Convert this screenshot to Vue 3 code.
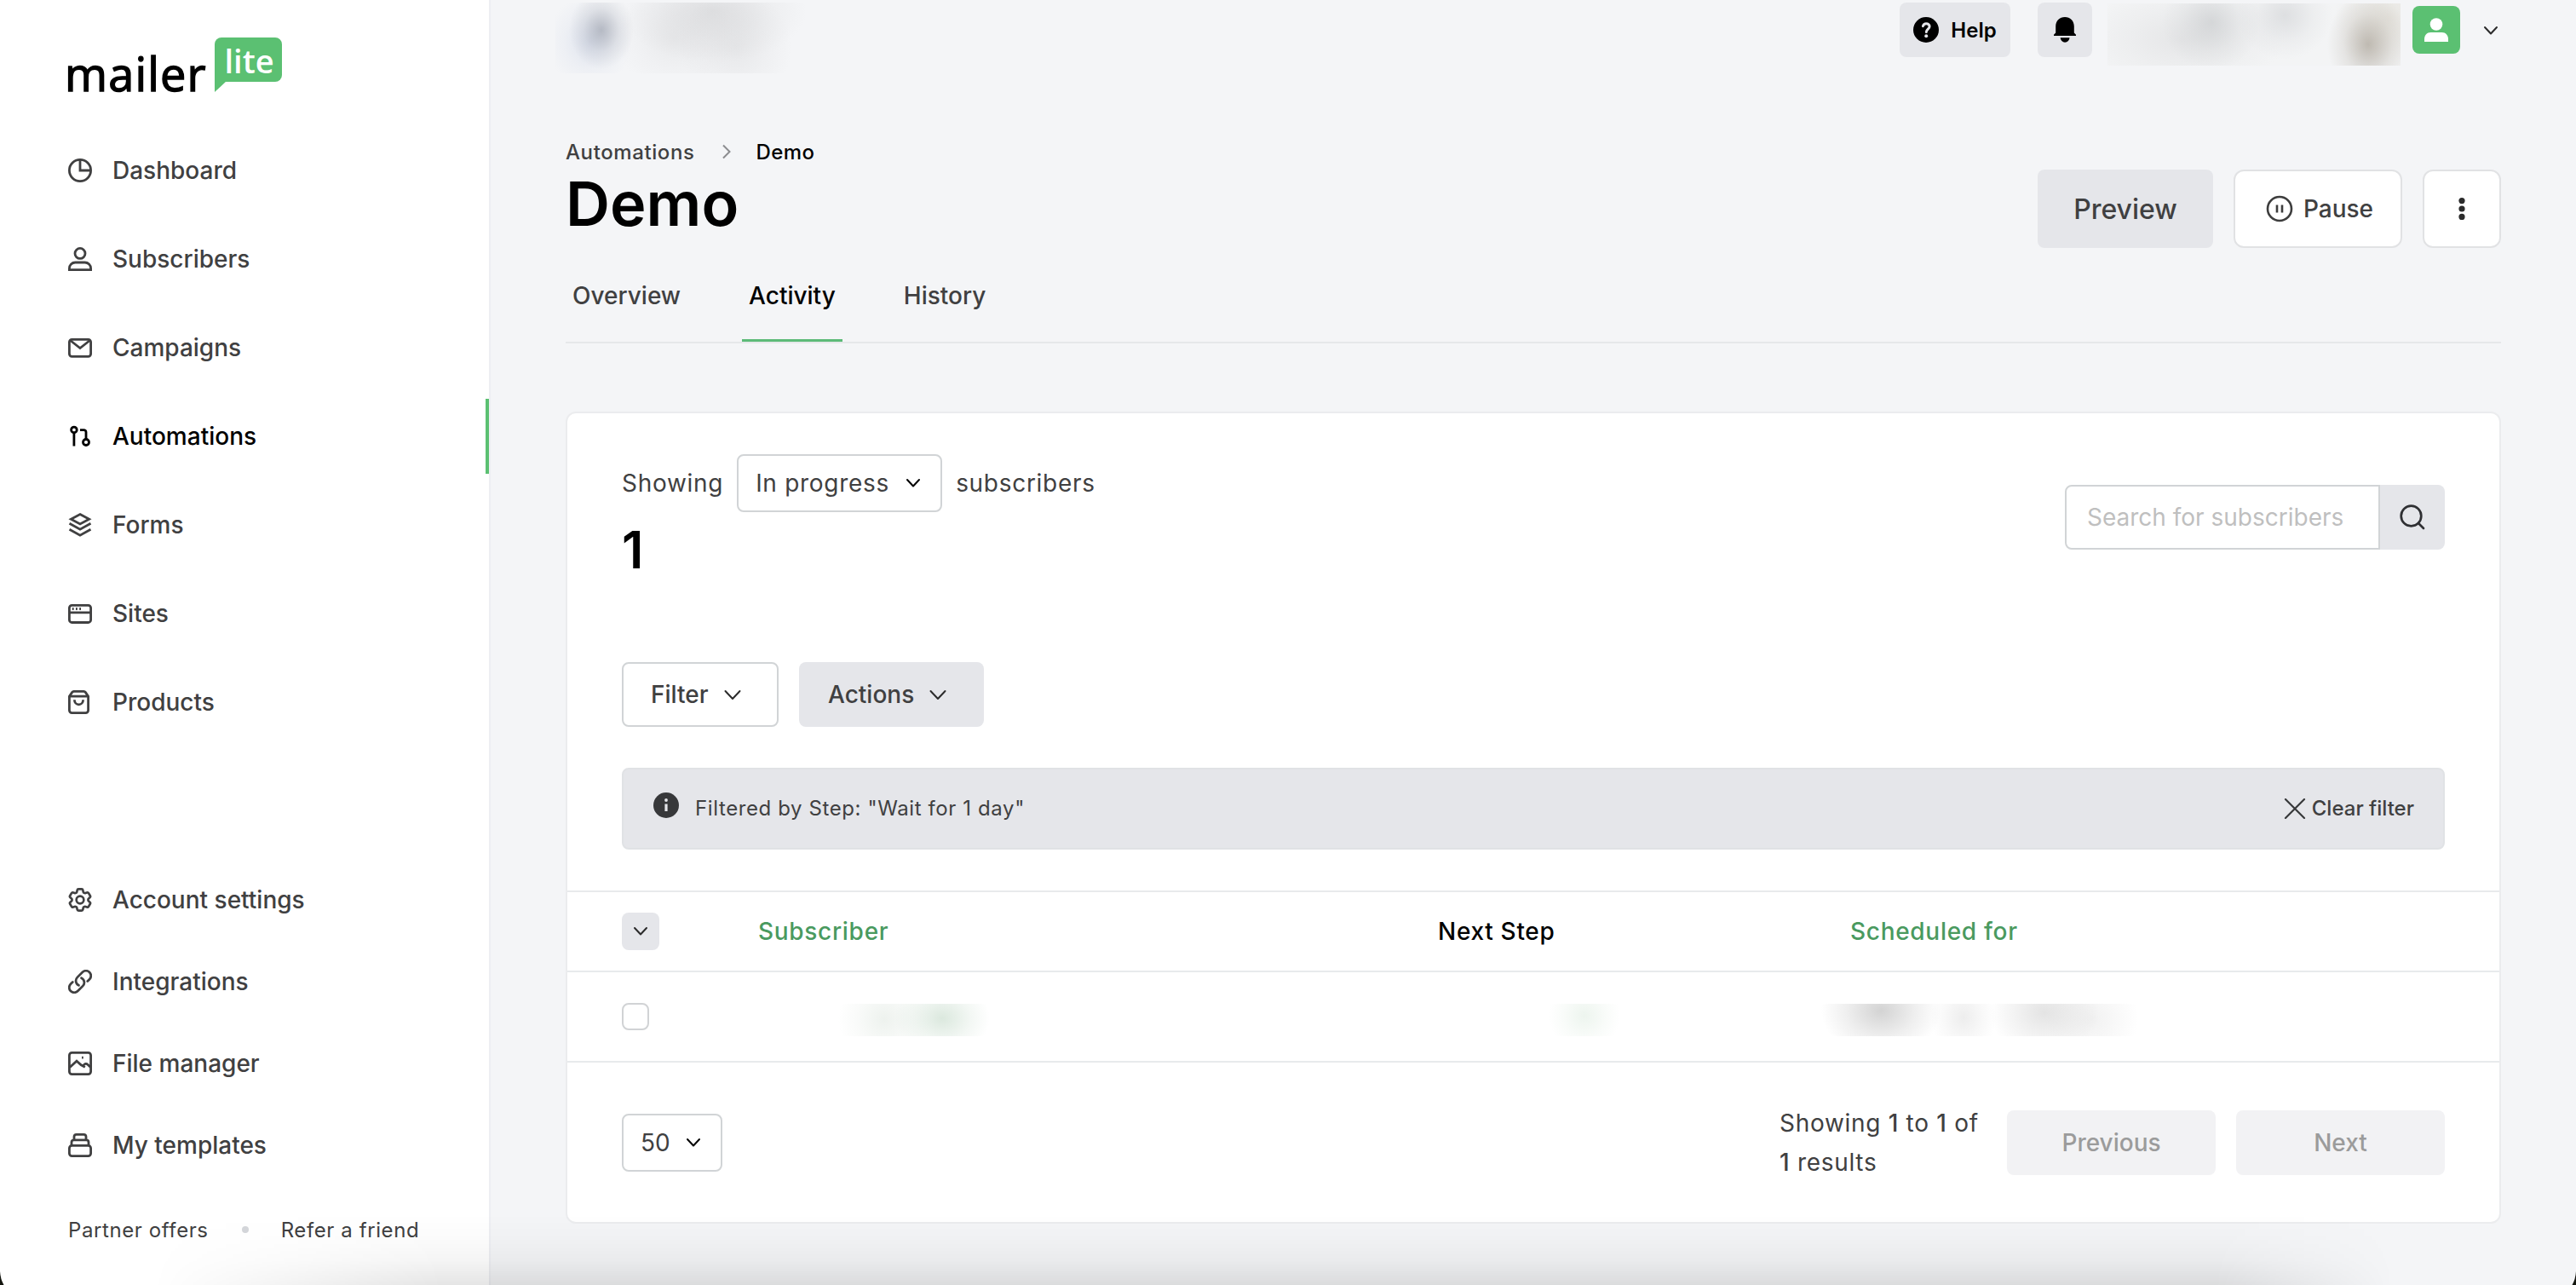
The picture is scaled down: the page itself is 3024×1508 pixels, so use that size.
<script setup>
import { ref } from 'vue'

const mainNav = ref([
  { label: 'Dashboard', icon: '<circle cx="14" cy="14" r="12.6"/><path d="M14 1.5V14h12.5"/>' },
  { label: 'Subscribers', icon: '<circle cx="14" cy="7.4" r="6"/><path d="M1.4 26.6V25a7 7 0 0 1 7-7h11.2a7 7 0 0 1 7 7v1.6z"/>' },
  { label: 'Campaigns', icon: '<rect x="1.4" y="4.3" width="25.2" height="20" rx="3"/><path d="M2.5 5.5L14 14.5l11.5-9"/>' },
  { label: 'Automations', icon: '<circle cx="6.9" cy="6.4" r="3.3"/><path d="M6.9 9.7v15.8M14 6.6h4.4a2.6 2.6 0 0 1 2.6 2.6v8.2"/><circle cx="21" cy="21" r="3.5"/>', active: true },
  { label: 'Forms', icon: '<path d="M14 1.6l10.6 5.6L14 12.9 3.4 7.2z"/><path d="M1.5 12.2L14 19.2l12.5-7M1.5 19.2L14 26.2l12.5-7"/>' },
  { label: 'Sites', icon: '<rect x="1.4" y="4.3" width="25.2" height="20.2" rx="3"/><path d="M1.3 12.8h25.4M4.8 8.5h1.8M9 8.5h1.8M13.2 8.5h1.8"/>' },
  { label: 'Products', icon: '<path d="M1.4 7.2v16.4a3 3 0 0 0 3 3h16.2a3 3 0 0 0 3-3V7.2l-3.3-4.8a2.4 2.4 0 0 0-2-1H6.7a2.4 2.4 0 0 0-2 1zM1.4 7.2h22.2"/><path d="M7.4 11.2c0 3 2.1 5.6 5.1 5.6s5.1-2.6 5.1-5.6"/>' },
])

const bottomNav = ref([
  { label: 'Account settings', icon: '<g transform="translate(14 14) scale(1.4) translate(-12 -12)" stroke-width="1.9"><path d="M9.594 3.94c.09-.542.56-.94 1.11-.94h2.593c.55 0 1.02.398 1.11.94l.213 1.281c.063.374.313.686.645.87.074.04.147.083.22.127.325.196.72.257 1.075.124l1.217-.456a1.125 1.125 0 0 1 1.37.49l1.296 2.247a1.125 1.125 0 0 1-.26 1.431l-1.003.827c-.293.241-.438.613-.43.992a7.723 7.723 0 0 1 0 .255c-.008.378.137.75.43.991l1.004.827c.424.35.534.955.26 1.43l-1.298 2.247a1.125 1.125 0 0 1-1.369.491l-1.217-.456c-.355-.133-.75-.072-1.076.124a6.47 6.47 0 0 1-.22.128c-.331.183-.581.495-.644.869l-.213 1.281c-.09.543-.56.94-1.11.94h-2.594c-.55 0-1.019-.398-1.11-.94l-.213-1.281c-.062-.374-.312-.686-.644-.87a6.52 6.52 0 0 1-.22-.127c-.325-.196-.72-.257-1.076-.124l-1.217.456a1.125 1.125 0 0 1-1.369-.49l-1.297-2.247a1.125 1.125 0 0 1 .26-1.431l1.004-.827c.292-.24.437-.613.43-.991a6.932 6.932 0 0 1 0-.255c.007-.38-.138-.751-.43-.992l-1.004-.827a1.125 1.125 0 0 1-.26-1.43l1.297-2.247a1.125 1.125 0 0 1 1.37-.491l1.216.456c.356.133.751.072 1.076-.124.072-.044.146-.086.22-.128.332-.183.582-.495.644-.869l.214-1.28Z"/><circle cx="12" cy="12" r="3.1"/></g>' },
  { label: 'Integrations', icon: '<g transform="translate(14 14) scale(1.31) translate(-12 -12)" stroke-width="2.1" stroke-linecap="round"><path d="M13.19 8.688a4.5 4.5 0 0 1 1.242 7.244l-4.5 4.5a4.5 4.5 0 0 1-6.364-6.364l1.757-1.757m13.35-.622l1.757-1.757a4.5 4.5 0 0 0-6.364-6.364l-4.5 4.5a4.5 4.5 0 0 0 1.242 7.244"/></g>' },
  { label: 'File manager', icon: '<rect x="1.4" y="1.4" width="25.2" height="25.2" rx="3"/><path d="M2 18.5l8-7.3 5.2 4.6 4.6 2.6M18 16.4c1.2-2.2 3.4-2.6 4.9-1.2l3.2 3M16 7.2h1.8"/>' },
  { label: 'My templates', icon: '<rect x="1.4" y="14.4" width="25.2" height="12.2" rx="3"/><path d="M4 14.4v-4a2.6 2.6 0 0 1 2.6-2.6h14.8a2.6 2.6 0 0 1 2.6 2.6v4M7 7.8V4a2.7 2.7 0 0 1 2.7-2.6h8.6A2.7 2.7 0 0 1 21 4v3.8"/>' },
])

const tabs = ref(['Overview', 'Activity', 'History'])
const activeTab = ref('Activity')
const search = ref('')
const pageSize = ref(50)
</script>

<template>
  <div class="page">
    <aside class="sidebar">
      <div class="logo">
        <span class="logo-main">mailer</span>
        <span class="logo-badge">lite
          <svg class="logo-tail" width="14" height="13" viewBox="0 0 14 13"><path d="M0 0h14L0 13z" fill="#5bc072" /></svg>
        </span>
      </div>

      <nav class="nav">
        <a v-for="item in mainNav" :key="item.label" class="nav-item" :class="{ active: item.active }">
          <svg class="nav-icon" viewBox="0 0 28 28" v-html="item.icon"></svg>
          {{ item.label }}
        </a>
      </nav>

      <nav class="nav nav-bottom">
        <a v-for="item in bottomNav" :key="item.label" class="nav-item">
          <svg class="nav-icon" viewBox="0 0 28 28" v-html="item.icon"></svg>
          {{ item.label }}
        </a>
      </nav>

      <div class="links">
        <a>Partner offers</a>
        <span class="dot"></span>
        <a>Refer a friend</a>
      </div>
    </aside>

    <main class="main">
      <header class="topbar">
        <div class="haze haze-brand"></div>
        <button class="top-btn help">
          <svg width="30" height="30" viewBox="0 0 30 30">
            <circle cx="15" cy="15" r="15" fill="#000" />
            <path d="M11.4 10.6c.6-2 2-2.9 3.8-2.9 2.2 0 3.9 1.3 3.9 3.3 0 3-3.8 3.2-3.8 6.6" fill="none" stroke="#e5e6ea" stroke-width="3" stroke-linecap="round" />
            <circle cx="15.2" cy="22.2" r="2" fill="#e5e6ea" />
          </svg>
          Help
        </button>
        <button class="top-btn bell">
          <svg width="26" height="30" viewBox="0 0 26 30">
            <path d="M13 0c6.2 0 10.8 4.5 10.8 10.8v7.7L26 20.7V22H0v-1.3l2.2-2.2v-7.7C2.2 4.5 6.8 0 13 0z" />
            <path d="M7.7 24.3h10.8a5.4 5.4 0 0 1-10.8 0z" />
          </svg>
        </button>
        <div class="haze haze-account"></div>
        <div class="avatar">
          <svg width="28" height="28" viewBox="0 0 28 28" fill="#fff">
            <circle cx="14" cy="7.5" r="7.3" />
            <path d="M0 28v-3c0-4.6 3-8 7.5-8h13c4.5 0 7.5 3.4 7.5 8v3z" />
          </svg>
        </div>
        <svg class="chev account-chev" width="18" height="12" viewBox="0 0 18 12"><path d="M2 2l7 7.5L16 2" /></svg>
      </header>

      <div class="heading">
        <div>
          <div class="breadcrumb">
            <a>Automations</a>
            <svg width="12" height="18" viewBox="0 0 12 18"><path d="M2 1.5L9.5 9 2 16.5" fill="none" stroke="#8b8c8f" stroke-width="2" /></svg>
            <span class="current">Demo</span>
          </div>
          <h1>Demo</h1>
        </div>
        <div class="heading-actions">
          <button class="btn-preview">Preview</button>
          <button class="btn-white btn-pause">
            <svg width="32" height="32" viewBox="0 0 32 32" fill="none" stroke="#3d3d3d" stroke-width="2.6">
              <circle cx="16" cy="16" r="14" />
              <path d="M13 11.5v9M19 11.5v9" />
            </svg>
            Pause
          </button>
          <button class="btn-white btn-more">
            <svg width="8" height="26" viewBox="0 0 8 26" fill="#2b2b2b"><circle cx="4" cy="3.6" r="3.6" /><circle cx="4" cy="13" r="3.6" /><circle cx="4" cy="22.4" r="3.6" /></svg>
          </button>
        </div>
      </div>

      <div class="tabs">
        <a v-for="tab in tabs" :key="tab" class="tab" :class="{ active: tab === activeTab }" @click="activeTab = tab">{{ tab }}</a>
      </div>

      <section class="card">
        <div class="card-top">
          <div>
            <div class="showing">
              <span>Showing</span>
              <div class="select select-status">
                In progress
                <svg class="chev" width="18" height="12" viewBox="0 0 18 12"><path d="M2 2l7 7.5L16 2" /></svg>
              </div>
              <span>subscribers</span>
            </div>
            <div class="count">1</div>
          </div>
          <div class="search">
            <input v-model="search" type="text" placeholder="Search for subscribers" />
            <button>
              <svg width="30" height="30" viewBox="0 0 30 30" fill="none" stroke="#2f3033" stroke-width="2.7" stroke-linecap="round"><circle cx="13.5" cy="13.5" r="11.8" /><path d="M22 22l6 6" /></svg>
            </button>
          </div>
        </div>

        <div class="toolbar">
          <button class="tool tool-filter">Filter <svg class="chev" width="20" height="13" viewBox="0 0 20 13"><path d="M1.5 2l8.5 9 8.5-9" /></svg></button>
          <button class="tool tool-actions">Actions <svg class="chev" width="20" height="13" viewBox="0 0 20 13"><path d="M1.5 2l8.5 9 8.5-9" /></svg></button>
        </div>

        <div class="filter-bar">
          <svg class="info" width="30" height="30" viewBox="0 0 30 30">
            <circle cx="15" cy="15" r="15" fill="#37383a" />
            <path d="M15 13.5V22" stroke="#e5e6ea" stroke-width="3.2" />
            <circle cx="15" cy="9" r="1.9" fill="#e5e6ea" />
          </svg>
          <span class="filter-text">Filtered by Step: "Wait for 1 day"</span>
          <a class="clear">
            <svg width="26" height="24" viewBox="0 0 26 24" fill="none" stroke="#37383a" stroke-width="2.2" stroke-linecap="round"><path d="M2 1l22 22M24 1L2 23" /></svg>
            Clear filter
          </a>
        </div>

        <div class="row row-head">
          <div>
            <button class="check-menu"><svg class="chev" width="18" height="12" viewBox="0 0 18 12"><path d="M2 2l7 7.5L16 2" /></svg></button>
          </div>
          <span class="sortable">Subscriber</span>
          <span>Next Step</span>
          <span class="sortable">Scheduled for</span>
        </div>
        <div class="row row-data">
          <div class="checkbox"></div>
          <div class="haze haze-mail"></div>
          <div class="haze haze-step"></div>
          <div class="haze haze-date"></div>
        </div>

        <footer class="card-footer">
          <div class="select select-size">
            {{ pageSize }}
            <svg class="chev" width="18" height="12" viewBox="0 0 18 12"><path d="M2 2l7 7.5L16 2" /></svg>
          </div>
          <p class="results">Showing <b>1</b> to <b>1</b> of<br><b>1</b> results</p>
          <button class="page-btn">Previous</button>
          <button class="page-btn">Next</button>
        </footer>
      </section>
    </main>

    <div class="bottom-shade"></div>
    <svg class="corner corner-left" width="5" height="16" viewBox="0 0 5 16"><path d="M0 0Q.5 9 4.5 16H0z" /></svg>
    <svg class="corner corner-right" width="5" height="16" viewBox="0 0 5 16"><path d="M5 0Q4.5 9 .5 16H5z" /></svg>
  </div>
</template>

<style>
body {
  margin: 0;
  overflow: hidden;
}
</style>

<style scoped>
.page {
  position: relative;
  display: flex;
  width: 3024px;
  height: 1508px;
  overflow: hidden;
  background: #f4f5f7;
  color: #404041;
  font-family: Inter, "Liberation Sans", sans-serif;
  font-size: 28px;
}

* {
  box-sizing: border-box;
}

button {
  display: flex;
  align-items: center;
  border: none;
  padding: 0;
  color: inherit;
  font-family: inherit;
  font-weight: 500;
}

svg {
  display: block;
  flex: none;
}

.chev {
  fill: none;
  stroke: #2b2b2b;
  stroke-width: 2;
  stroke-linecap: round;
  stroke-linejoin: round;
}

/* sidebar */
.sidebar {
  display: flex;
  flex-direction: column;
  flex: none;
  width: 576px;
  border-right: 2px solid #edeef2;
  background: #fff;
}

.logo {
  display: flex;
  height: 148px;
  padding-left: 76px;
  font-family: "Open Sans", "Noto Sans", sans-serif;
}
.logo-main {
  width: 176px;
  margin-top: 49px;
  color: #000;
  font-size: 54px;
  font-weight: 500;
  letter-spacing: 1.2px;
  line-height: 74px;
  -webkit-text-stroke: 1.4px #000;
}
.logo-badge {
  position: relative;
  width: 79px;
  height: 52px;
  margin-top: 44px;
  padding-left: 2px;
  border-radius: 8px 8px 8px 0;
  background: #5bc072;
  color: #fff;
  font-size: 38px;
  font-weight: 600;
  line-height: 54px;
  text-align: center;
}
.logo-tail {
  position: absolute;
  left: 0;
  top: 51px;
}

.nav-item {
  display: flex;
  align-items: center;
  gap: 24px;
  height: 104px;
  padding-left: 80px;
  font-weight: 500;
}
.nav-icon {
  width: 28px;
  height: 28px;
  fill: none;
  stroke: currentColor;
  stroke-width: 2.8;
}
.nav-item.active {
  position: relative;
  color: #000;
}
.nav-item.active::after {
  content: "";
  position: absolute;
  right: 0;
  top: 8px;
  width: 4px;
  height: 88px;
  background: #5bc072;
}
.nav-bottom {
  margin-top: 132px;
}
.nav-bottom .nav-item {
  height: 96px;
}

.links {
  display: flex;
  align-items: center;
  height: 36px;
  margin-top: 33px;
  padding-left: 80px;
  font-size: 24px;
  letter-spacing: 0.6px;
}
.dot {
  width: 8px;
  height: 8px;
  margin: 0 38px 0 39px;
  border-radius: 50%;
  background: #d4d6da;
}

/* main column */
.main {
  flex: 1;
  padding: 0 88px;
}

.topbar {
  display: flex;
  height: 148px;
  margin-left: -12px;
}
.haze-brand {
  width: 300px;
  height: 83px;
  margin: 3px auto 0 0;
  background:
    radial-gradient(ellipse 38px 46px at 54px 32px, rgba(120, 126, 140, 0.45), rgba(120, 126, 140, 0.14) 55%, transparent),
    radial-gradient(ellipse 50px 54px at 40px 46px, rgba(180, 192, 220, 0.35), rgba(180, 192, 220, 0.1) 60%, transparent),
    radial-gradient(ellipse 110px 60px at 185px 10px, rgba(190, 190, 192, 0.38), rgba(190, 190, 192, 0.12) 60%, transparent),
    radial-gradient(ellipse 70px 60px at 140px 42px, rgba(205, 205, 207, 0.3), rgba(205, 205, 207, 0.1) 60%, transparent),
    radial-gradient(ellipse 66px 66px at 212px 52px, rgba(205, 205, 207, 0.34), rgba(205, 205, 207, 0.12) 60%, transparent);
}
.top-btn {
  justify-content: center;
  height: 64px;
  margin-top: 3px;
  border-radius: 8px;
  background: #e5e6ea;
  color: #000;
}
.help {
  gap: 14px;
  width: 130px;
  margin-right: 32px;
  font-size: 24px;
  font-weight: 600;
}
.bell {
  width: 64px;
  margin-right: 18px;
}
.haze-account {
  width: 344px;
  height: 73px;
  margin: 4px 14px 0 0;
  background:
    radial-gradient(ellipse 48px 60px at 306px 48px, rgba(165, 157, 145, 0.65), rgba(165, 157, 145, 0.18) 60%, transparent),
    radial-gradient(ellipse 64px 64px at 330px 16px, rgba(222, 218, 208, 0.55), rgba(222, 218, 208, 0.2) 60%, transparent),
    radial-gradient(ellipse 58px 56px at 122px 22px, rgba(190, 193, 195, 0.5), rgba(190, 193, 195, 0.15) 60%, transparent),
    radial-gradient(ellipse 56px 52px at 208px 14px, rgba(200, 202, 205, 0.5), rgba(200, 202, 205, 0.15) 60%, transparent),
    radial-gradient(ellipse 120px 60px at 88px 42px, rgba(210, 210, 212, 0.42), rgba(210, 210, 212, 0.15) 60%, transparent),
    #f3f4f5;
}
.avatar {
  display: flex;
  align-items: center;
  justify-content: center;
  width: 56px;
  height: 56px;
  margin-top: 7px;
  border-radius: 8px;
  background: #5bc072;
}
.account-chev {
  margin: 30px 3px 0 27px;
}

.heading {
  display: flex;
  justify-content: space-between;
  height: 167px;
}
.breadcrumb {
  display: flex;
  align-items: center;
  height: 32px;
  margin-top: 14px;
  font-size: 24px;
  font-weight: 500;
  letter-spacing: 0.6px;
}
.breadcrumb svg {
  margin: 0 29px 0 31px;
}
.breadcrumb .current {
  color: #000;
  letter-spacing: 0.4px;
}
h1 {
  margin: 0;
  color: #000;
  font-size: 72px;
  font-weight: 600;
  line-height: 90px;
}
.heading-actions {
  display: flex;
  gap: 24px;
  padding-top: 51px;
}
.heading-actions button {
  justify-content: center;
  height: 92px;
}
.btn-preview {
  width: 206px;
  border-radius: 8px;
  background: #e5e6ea;
  font-size: 32px;
}
.btn-white {
  border: 2px solid #e1e2e4;
  border-radius: 12px;
  background: #fff;
  font-size: 28px;
}
.btn-pause {
  gap: 12px;
  width: 198px;
  padding-left: 4px;
}
.btn-more {
  width: 92px;
}

.tabs {
  display: flex;
  gap: 64px;
  height: 88px;
  border-bottom: 2px solid #e6e8ea;
}
.tab {
  height: 86px;
  padding: 0 8px;
  font-weight: 500;
  line-height: 65px;
}
.tab.active {
  border-bottom: 3px solid #5dbb78;
  color: #000;
}

/* card */
.card {
  height: 953px;
  margin-top: 80px;
  border: 2px solid #ebecee;
  border-radius: 12px;
  background: #fff;
}
.card-top {
  display: flex;
  justify-content: space-between;
  height: 272px;
  padding: 48px 64px 0;
}
.showing {
  display: flex;
  align-items: center;
  height: 68px;
  letter-spacing: 0.7px;
}
.select {
  display: flex;
  align-items: center;
  justify-content: space-between;
  height: 68px;
  padding: 0 23px 0 20px;
  border: 2px solid #d1d4d6;
  border-radius: 8px;
}
.select .chev {
  stroke: #000;
}
.select-status {
  width: 241px;
  margin: 0 16px;
}
.count {
  color: #000;
  font-size: 60px;
  font-weight: 600;
  line-height: 88px;
}
.search {
  display: flex;
  height: 76px;
  margin-top: 36px;
}
.search input {
  width: 370px;
  border: 2px solid #d1d4d6;
  border-radius: 8px 0 0 8px;
  padding: 0 24px;
  outline: none;
  font-family: inherit;
  font-size: 28px;
}
.search input::placeholder {
  color: #bfbfbf;
}
.search button {
  justify-content: center;
  width: 76px;
  border-radius: 0 8px 8px 0;
  background: #e5e6ea;
}

.toolbar {
  display: flex;
  gap: 24px;
  padding: 20px 64px 0;
}
.tool {
  gap: 18px;
  height: 76px;
  border-radius: 8px;
  font-size: 28px;
}
.tool-filter {
  width: 184px;
  padding-left: 32px;
  border: 2px solid #d1d4d6;
  background: #fff;
}
.tool-actions {
  width: 217px;
  padding-left: 34px;
  background: #e5e6ea;
}

.filter-bar {
  display: flex;
  align-items: center;
  height: 96px;
  margin: 48px 64px;
  padding: 0 34px 1px 35px;
  border: 2px solid #e0e2e5;
  border-radius: 8px;
  background: #e5e6ea;
  font-size: 24px;
}
.info {
  margin: 0 19px 7px 0;
}
.filter-text {
  letter-spacing: 0.6px;
}
.clear {
  display: flex;
  align-items: center;
  gap: 7px;
  margin-left: auto;
  font-weight: 500;
}

.row {
  display: grid;
  grid-template-columns: 160px 798px 484px 1fr;
  align-items: center;
  padding: 0 64px;
  border-top: 2px solid #e8eaec;
}
.row-head {
  height: 94px;
  color: #000;
  font-weight: 500;
  letter-spacing: 0.7px;
}
.sortable {
  color: #4a9a5f;
}
.check-menu {
  justify-content: center;
  width: 44px;
  height: 44px;
  border-radius: 8px;
  background: #e5e6ea;
}
.row-data {
  height: 106px;
}
.checkbox {
  width: 32px;
  height: 32px;
  border: 2px solid #d1d3d5;
  border-radius: 8px;
}
.row .haze {
  height: 38px;
  margin-top: 8px;
}
.haze-mail {
  background:
    radial-gradient(ellipse 56px 44px at 216px 17px, rgba(195, 217, 200, 0.6), rgba(195, 217, 200, 0.2) 60%, transparent),
    radial-gradient(ellipse 54px 54px at 148px 18px, rgba(220, 229, 221, 0.5), rgba(220, 229, 221, 0.16) 60%, transparent);
}
.haze-step {
  background: radial-gradient(ellipse 42px 42px at 172px 14px, rgba(225, 238, 227, 0.6), rgba(225, 238, 227, 0.2) 60%, transparent);
}
.haze.haze-date {
  margin-left: -34px;
  background:
    radial-gradient(ellipse 70px 54px at 70px 8px, rgba(175, 175, 175, 0.55), rgba(175, 175, 175, 0.2) 58%, transparent),
    radial-gradient(ellipse 38px 44px at 167px 16px, rgba(215, 215, 215, 0.45), rgba(215, 215, 215, 0.16) 60%, transparent),
    radial-gradient(ellipse 64px 52px at 262px 10px, rgba(200, 200, 200, 0.5), rgba(200, 200, 200, 0.2) 60%, transparent),
    radial-gradient(ellipse 54px 54px at 318px 18px, rgba(225, 225, 225, 0.45), rgba(225, 225, 225, 0.18) 60%, transparent);
}

.card-footer {
  display: flex;
  align-items: center;
  gap: 24px;
  height: 189px;
  padding: 0 64px;
  border-top: 2px solid #e8eaec;
}
.select-size {
  width: 118px;
  margin-right: auto;
}
.results {
  width: 243px;
  margin: 0;
  line-height: 46px;
  letter-spacing: 0.7px;
}
.results b {
  font-weight: 500;
}
.page-btn {
  justify-content: center;
  width: 245px;
  height: 76px;
  border-radius: 8px;
  background: #f2f2f4;
  color: #9b9b9b;
  font-size: 28px;
}

.bottom-shade {
  position: absolute;
  left: 0;
  right: 0;
  bottom: 0;
  height: 84px;
  background: linear-gradient(rgba(0, 0, 0, 0), rgba(0, 0, 0, 0.015) 35%, rgba(0, 0, 0, 0.04) 65%, rgba(0, 0, 0, 0.1));
  mask-image: linear-gradient(to right, transparent 180px, #000 520px, #000 2600px, transparent 2810px);
}
.corner {
  position: absolute;
  bottom: 0;
  fill: #14160f;
}
.corner-left {
  left: 0;
}
.corner-right {
  right: 0;
}
</style>
